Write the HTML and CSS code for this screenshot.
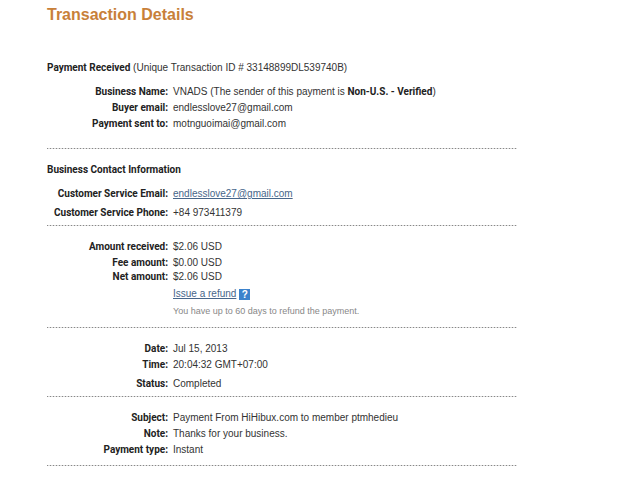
FILE: index.html
```
<!DOCTYPE html>
<html lang="en">
<head>
  <meta charset="UTF-8">
  <meta name="viewport" content="width=device-width, initial-scale=1.0">
  <title>Transaction Details</title>
  <link rel="stylesheet" href="styles.css">
</head>
<body>
  <main class="container">
    <h1>Transaction Details</h1>

    <section class="payment">
      <p class="heading"><strong>Payment Received</strong> (Unique Transaction ID # 33148899DL539740B)</p>
      <dl>
        <div class="row"><dt>Business Name:</dt><dd>VNADS (The sender of this payment is <strong>Non-U.S. - Verified</strong>)</dd></div>
        <div class="row"><dt>Buyer email:</dt><dd>endlesslove27@gmail.com</dd></div>
        <div class="row"><dt>Payment sent to:</dt><dd>motnguoimai@gmail.com</dd></div>
      </dl>
    </section>

    <section class="contact">
      <h2 class="heading">Business Contact Information</h2>
      <dl>
        <div class="row"><dt>Customer Service Email:</dt><dd><a href="mailto:endlesslove27@gmail.com">endlesslove27@gmail.com</a></dd></div>
        <div class="row spaced"><dt>Customer Service Phone:</dt><dd>+84 973411379</dd></div>
      </dl>
    </section>

    <section class="amounts">
      <dl>
        <div class="row"><dt>Amount received:</dt><dd>$2.06 USD</dd></div>
        <div class="row"><dt>Fee amount:</dt><dd>$0.00 USD</dd></div>
        <div class="row tight"><dt>Net amount:</dt><dd>$2.06 USD</dd></div>
      </dl>
      <div class="refund">
        <a href="#refund">Issue a refund</a>
        <button type="button" class="help" aria-label="Help">?</button>
      </div>
      <p class="hint">You have up to 60 days to refund the payment.</p>
    </section>

    <section class="status">
      <dl>
        <div class="row"><dt>Date:</dt><dd>Jul 15, 2013</dd></div>
        <div class="row"><dt>Time:</dt><dd>20:04:32 GMT+07:00</dd></div>
        <div class="row spaced"><dt>Status:</dt><dd>Completed</dd></div>
      </dl>
    </section>

    <section class="message">
      <dl>
        <div class="row"><dt>Subject:</dt><dd>Payment From HiHibux.com to member ptmhedieu</dd></div>
        <div class="row"><dt>Note:</dt><dd>Thanks for your business.</dd></div>
        <div class="row"><dt>Payment type:</dt><dd>Instant</dd></div>
      </dl>
    </section>
  </main>
</body>
</html>
```
FILE: styles.css
```
body {
  margin: 0;
  background-color: #fff;
  color: #333;
  font-family: "Liberation Sans", Arial, sans-serif;
  font-size: 10px;
  line-height: 16px;
}
.container {
  max-width: 470px;
  margin-left: 47px;
  padding-top: 5px;
}
h1, h2, p, dl, dd {
  margin: 0;
}
h1 {
  color: #c88039;
  font-size: 16px;
  line-height: 20px;
  margin-bottom: 22px;
}
h2 {
  font-size: 10px;
}
strong, h2, dt {
  color: #222;
  font-family: Roboto, Arial, sans-serif;
  font-weight: bold;
}
a {
  color: #47668a;
}
/* dotted rule under each section */
section {
  padding: 13px 0 8px;
  background: repeating-linear-gradient(to right, #888 0, #888 1px, #ddd 1px, #ddd 3px) left bottom / 100% 1px no-repeat;
}
.heading {
  margin-bottom: 8px;
}
.row {
  display: flex;
  gap: 5px;
}
.row dt {
  width: 121px;
  text-align: right;
}
.row dd {
  flex: 1;
}
.spaced {
  margin-top: 3px;
}
.tight {
  line-height: 12px;
}
.payment {
  padding-bottom: 17px;
}
.contact,
.status {
  padding-bottom: 5px;
}
.amounts {
  padding-bottom: 9px;
}
.refund {
  display: flex;
  align-items: center;
  gap: 3px;
  margin: 3px 0 1px 126px;
}
.help {
  width: 11px;
  height: 11px;
  padding: 0;
  border: none;
  background-color: #3b82cc;
  color: #fff;
  font: bold 10px/11px "Liberation Sans", Arial, sans-serif;
  cursor: pointer;
}
.hint {
  margin-left: 126px;
  color: #888;
  font-size: 9px;
}
```
